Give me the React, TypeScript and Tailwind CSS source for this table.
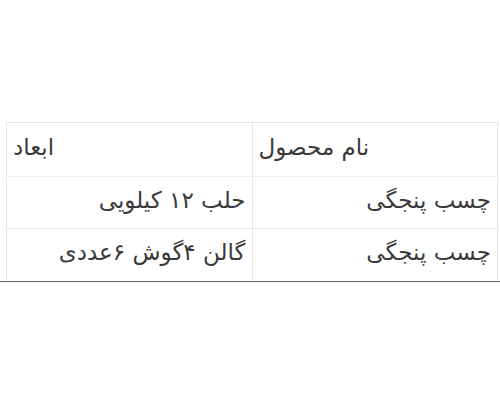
const rows = [
  { name: "چسب پنجگی", size: "حلب ۱۲ کیلویی" },
  { name: "چسب پنجگی", size: "گالن ۴گوش ۶عددی" },
];

export default function App() {
  return (
    <div className="w-[500px] h-[400px] bg-white pt-[122px] font-['DejaVu_Sans',sans-serif] text-[#3a3a3a]">
      <div className="border-b-[1.5px] border-[#5e5e5e] pl-[6px] pr-[2px]">
        <table dir="rtl" className="w-full border-collapse table-fixed text-[23px]">
          <thead>
            <tr className="h-[54px]">
              <th className="border border-[#e6e6e6] border-b-[#ececec] px-[6px] pb-[5px] text-left font-normal">نام محصول</th>
              <th className="border border-[#e6e6e6] border-b-[#ececec] px-[6px] pb-[5px] text-left font-normal">ابعاد</th>
            </tr>
          </thead>
          <tbody>
            {rows.map((r, i) => (
              <tr key={i} className="h-[52px]">
                <td className="border border-[#e6e6e6] border-b-0 px-[6px] pb-[5px] text-right">{r.name}</td>
                <td className="border border-[#e6e6e6] border-b-0 px-[6px] pb-[5px] text-right">{r.size}</td>
              </tr>
            ))}
          </tbody>
        </table>
      </div>
    </div>
  );
}
